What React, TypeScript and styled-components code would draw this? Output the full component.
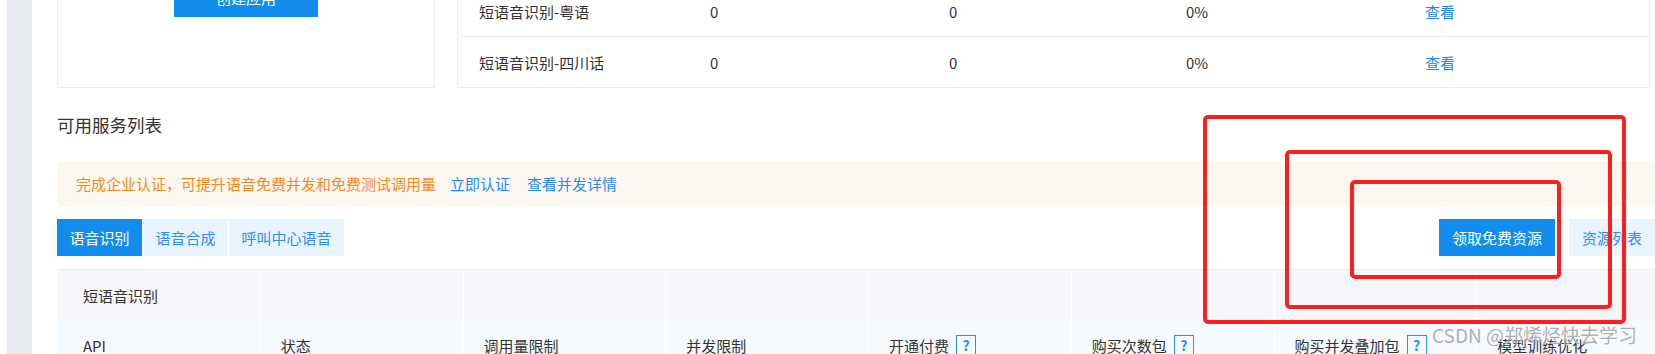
import React from 'react';
import styled, { createGlobalStyle } from 'styled-components';

const GlobalStyle = createGlobalStyle`
  body {
    margin: 0;
    overflow: hidden;
    background: #fff;
    font-family: 'Noto Sans CJK SC', 'Noto Sans', sans-serif;
    color: #333;
  }
`;

const Page = styled.div`
  position: relative;
  display: flex;
  align-items: flex-start;
  width: 1655px;
  height: 354px;
  overflow: hidden;
  background: #fff;
`;

const Rail = styled.div`
  flex: none;
  align-self: stretch;
  width: 25px;
  margin-left: 7px;
  background: #e6e9ee;
`;

const Main = styled.main`
  flex: none;
  width: 1598px;
  margin-left: 25px;
  display: flex;
  flex-direction: column;

  & > * {
    flex: none;
  }
`;

const TopRow = styled.div`
  display: flex;
  gap: 22px;
  height: 228px;
  margin-top: -140px;
`;

const AppCard = styled.div`
  box-sizing: border-box;
  width: 378px;
  border: 1px solid #ebedf0;
  display: flex;
  flex-direction: column;
  align-items: center;
  justify-content: flex-end;
  padding-bottom: 70px;
`;

const CreateButton = styled.button`
  width: 144px;
  height: 40px;
  border: none;
  background: #128ded;
  color: #fff;
  font-family: inherit;
  font-size: 15px;
`;

const UsageCard = styled.div`
  box-sizing: border-box;
  width: 1193px;
  border: 1px solid #ebedf0;
  display: flex;
  flex-direction: column;
  justify-content: flex-end;
  overflow: hidden;
`;

const UsageRow = styled.div`
  flex: none;
  display: grid;
  grid-template-columns: 231px 239px 237px 239px 1fr;
  align-items: center;
  height: 50px;
  padding-left: 21px;
  font-size: 15px;

  & + & {
    border-top: 1px solid #e8eef7;
  }
`;

const LinkText = styled.span`
  color: #1e88e5;
`;

const SectionTitle = styled.h3`
  margin: 25px 0 0;
  font-size: 17.5px;
  font-weight: 400;
  line-height: 24px;
  color: #333;
`;

const Notice = styled.div`
  margin-top: 24px;
  height: 45px;
  display: flex;
  align-items: center;
  padding-left: 19px;
  background: #fcf6f0;
  border-radius: 6px;
  font-size: 15px;
  color: #f28b1f;
`;

const NoticeLink = styled.a<{ $gap: number }>`
  margin-left: ${({ $gap }) => $gap}px;
  color: #2a8cf0;
  text-decoration: none;
`;

const ToolRow = styled.div`
  margin-top: 13px;
  display: flex;
  justify-content: space-between;
  height: 37px;
`;

const Tabs = styled.div`
  display: flex;
  gap: 1px;
`;

const Tab = styled.div<{ $active?: boolean }>`
  display: flex;
  align-items: center;
  padding: 0 12.5px;
  font-size: 15px;
  background: ${({ $active }) => ($active ? '#128ded' : '#e8f4fe')};
  color: ${({ $active }) => ($active ? '#fff' : '#2f8ef0')};
`;

const Actions = styled.div`
  display: flex;
  gap: 14px;
`;

const ActionButton = styled.button<{ $primary?: boolean }>`
  height: 37px;
  padding: 0 13px;
  border: none;
  font-family: inherit;
  font-size: 15px;
  background: ${({ $primary }) => ($primary ? '#128ded' : '#e8f4fe')};
  color: ${({ $primary }) => ($primary ? '#fff' : '#2f8ef0')};
`;

const Table = styled.div`
  margin-top: 13px;
  width: 1622px;
  border-top: 1px solid #ebedf0;
`;

const TableRow = styled.div<{ $head?: boolean }>`
  display: grid;
  grid-template-columns: repeat(8, 202.75px);
  height: 50px;
  background: ${({ $head }) => ($head ? '#f4f6f9' : '#f5fafe')};
`;

const Cell = styled.div`
  display: flex;
  align-items: center;
  padding-left: 20px;
  font-size: 15px;
  color: #333;
  white-space: nowrap;

  &:first-child {
    padding-left: 26px;
  }

  & + & {
    border-left: 1px solid #fff;
  }
`;

const HelpMark = styled.span`
  box-sizing: border-box;
  display: inline-flex;
  align-items: center;
  justify-content: center;
  width: 20px;
  height: 20px;
  margin-left: 7px;
  border: 1px solid #2d8cf0;
  color: #2d8cf0;
  font-size: 14px;
  font-weight: 700;
`;

const Mark = styled.div<{ $x: number; $y: number; $w: number; $h: number }>`
  position: absolute;
  left: ${({ $x }) => $x}px;
  top: ${({ $y }) => $y}px;
  width: ${({ $w }) => $w}px;
  height: ${({ $h }) => $h}px;
  box-sizing: border-box;
  border: 4px solid #ff1d1d;
  border-radius: 5px;
  pointer-events: none;
`;

const Watermark = styled.div`
  position: absolute;
  left: 1432px;
  top: 322px;
  font-size: 19px;
  line-height: 26px;
  color: rgba(105, 105, 105, 0.55);
  text-shadow: 0 0 1px #fff;
  white-space: nowrap;
`;

const usage = [
  { name: '短语音识别-普通话', a: '0', b: '0', rate: '0%' },
  { name: '短语音识别-英语', a: '0', b: '0', rate: '0%' },
  { name: '短语音识别-粤语', a: '0', b: '0', rate: '0%' },
  { name: '短语音识别-四川话', a: '0', b: '0', rate: '0%' },
];

const columns: { label: string; help?: boolean }[] = [
  { label: 'API' },
  { label: '状态' },
  { label: '调用量限制' },
  { label: '并发限制' },
  { label: '开通付费', help: true },
  { label: '购买次数包', help: true },
  { label: '购买并发叠加包', help: true },
  { label: '模型训练优化' },
];

const App = () => {
  return (
    <Page>
      <GlobalStyle />
      <Rail />
      <Main>
        <TopRow>
          <AppCard>
            <CreateButton>创建应用</CreateButton>
          </AppCard>
          <UsageCard>
            {usage.map((row) => (
              <UsageRow key={row.name}>
                <span>{row.name}</span>
                <span>{row.a}</span>
                <span>{row.b}</span>
                <span>{row.rate}</span>
                <LinkText>查看</LinkText>
              </UsageRow>
            ))}
          </UsageCard>
        </TopRow>

        <SectionTitle>可用服务列表</SectionTitle>

        <Notice>
          完成企业认证，可提升语音免费并发和免费测试调用量
          <NoticeLink $gap={14}>立即认证</NoticeLink>
          <NoticeLink $gap={17}>查看并发详情</NoticeLink>
        </Notice>

        <ToolRow>
          <Tabs>
            <Tab $active>语音识别</Tab>
            <Tab>语音合成</Tab>
            <Tab>呼叫中心语音</Tab>
          </Tabs>
          <Actions>
            <ActionButton $primary>领取免费资源</ActionButton>
            <ActionButton>资源列表</ActionButton>
          </Actions>
        </ToolRow>

        <Table>
          <TableRow $head>
            <Cell>短语音识别</Cell>
            {columns.slice(1).map((c) => (
              <Cell key={c.label} />
            ))}
          </TableRow>
          <TableRow>
            {columns.map((c) => (
              <Cell key={c.label}>
                {c.label}
                {c.help && <HelpMark>?</HelpMark>}
              </Cell>
            ))}
          </TableRow>
        </Table>
      </Main>

      <Mark $x={1203} $y={115} $w={423} $h={209} />
      <Mark $x={1285} $y={150} $w={327} $h={159} />
      <Mark $x={1350} $y={180} $w={211} $h={99} />
      <Watermark>CSDN @郑烯烃快去学习</Watermark>
    </Page>
  );
};

export default App;
